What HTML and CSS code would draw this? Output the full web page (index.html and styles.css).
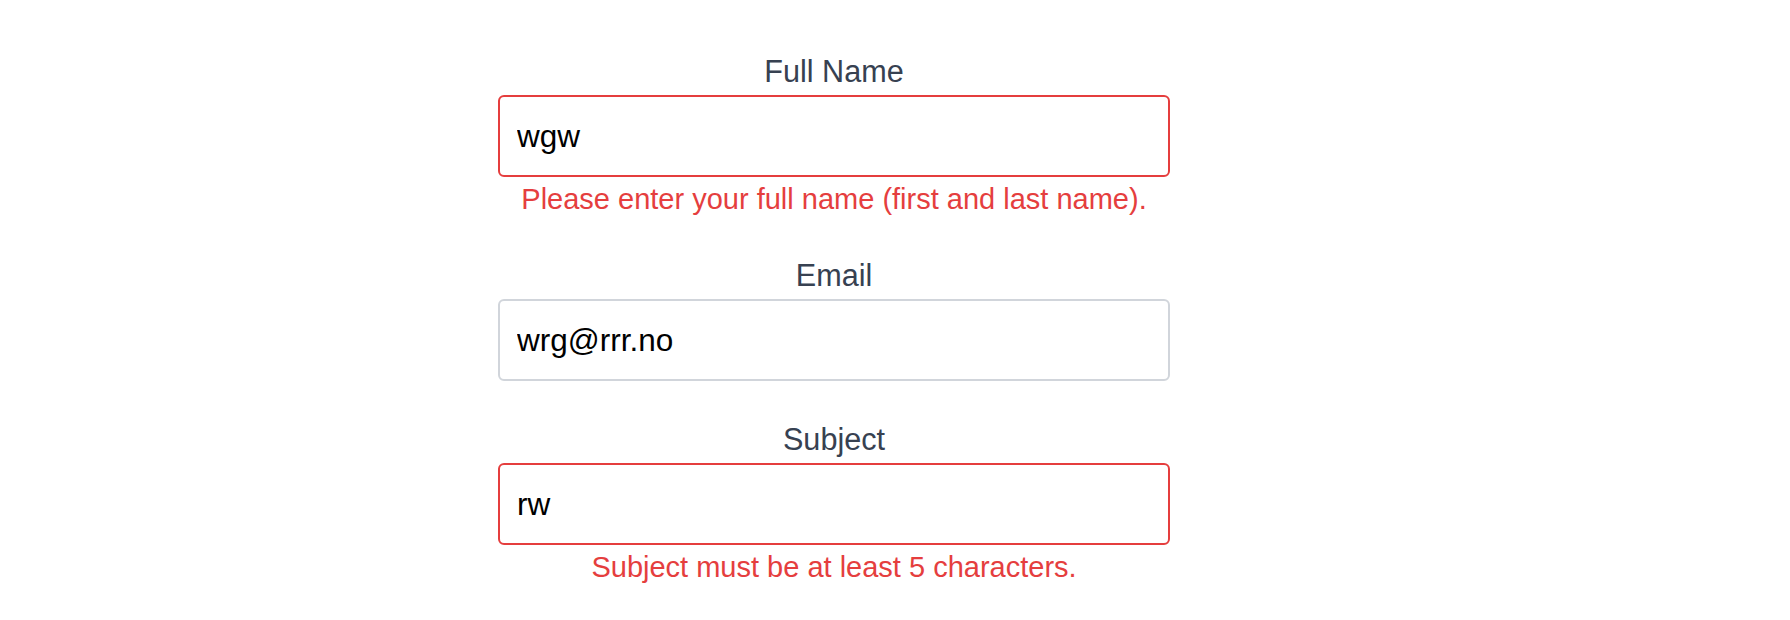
FILE: index.html
```html
<!DOCTYPE html>
<html lang="en">
<head>
<meta charset="utf-8">
<title>Contact form</title>
<link rel="stylesheet" href="styles.css">
</head>
<body>
<form class="form" novalidate>
  <div class="field">
    <label class="label" for="name">Full Name</label>
    <input class="input input-error" id="name" type="text" value="wgw">
    <p class="error">Please enter your full name (first and last name).</p>
  </div>
  <div class="field">
    <label class="label" for="email">Email</label>
    <input class="input" id="email" type="email" value="wrg@rrr.no">
  </div>
  <div class="field">
    <label class="label" for="subject">Subject</label>
    <input class="input input-error" id="subject" type="text" value="rw">
    <p class="error">Subject must be at least 5 characters.</p>
  </div>
</form>
</body>
</html>
```

FILE: styles.css
```css
html, body {
  margin: 0;
  padding: 0;
  background: #ffffff;
}

body {
  font-family: "Liberation Sans", Arial, sans-serif;
  padding-top: 53px;
}

.form {
  width: 672px;
  margin-left: 498px;
  display: flex;
  flex-direction: column;
}

.field {
  display: flex;
  flex-direction: column;
  margin-bottom: 40px;
}

.label {
  display: block;
  text-align: center;
  font-size: 30.6px;
  line-height: 36px;
  color: #374151;
  margin-bottom: 6px;
}

.input {
  box-sizing: border-box;
  width: 100%;
  height: 82px;
  padding: 0 17px;
  border: 2px solid #d1d5db;
  border-radius: 6px;
  font-family: "Liberation Sans", Arial, sans-serif;
  font-size: 31.5px;
  color: #000000;
  background: #ffffff;
  outline: none;
}

.input-error {
  border-color: #e53e3e;
}

.error {
  margin: 4px 0 0;
  text-align: center;
  font-size: 29px;
  line-height: 36px;
  color: #e53e3e;
}
```
